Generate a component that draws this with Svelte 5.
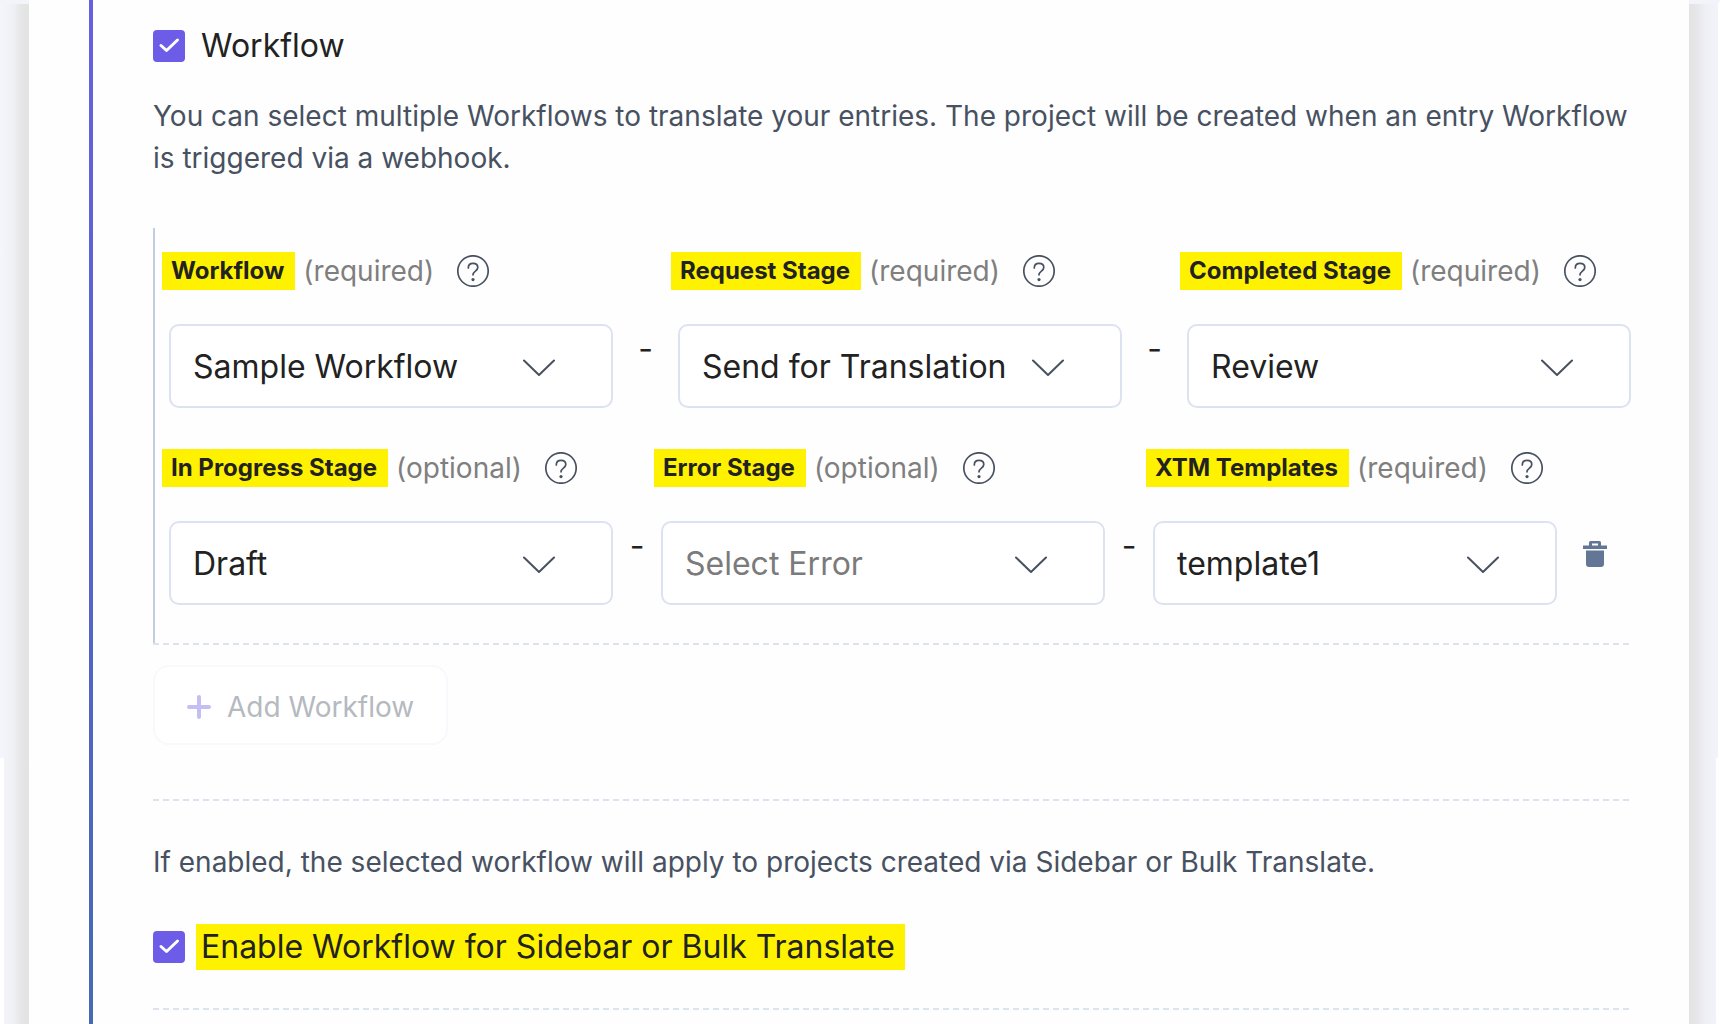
<script lang="ts">
  type Field = {
    id: string;
    label: string;
    hint: string;
    value: string;
    narrow?: boolean;
    placeholder?: boolean;
  };

  const rows: Field[][] = [
    [
      { id: "workflow", label: "Workflow", hint: "required", value: "Sample Workflow" },
      { id: "request", label: "Request Stage", hint: "required", value: "Send for Translation" },
      { id: "completed", label: "Completed Stage", hint: "required", value: "Review" },
    ],
    [
      { id: "progress", label: "In Progress Stage", hint: "optional", value: "Draft" },
      { id: "error", label: "Error Stage", hint: "optional", value: "Select Error", placeholder: true },
      { id: "template", label: "XTM Templates", hint: "required", value: "template1", narrow: true },
    ],
  ];

  let useWorkflow = $state(true);
  let useSidebar = $state(true);
</script>

{#snippet tick()}
  <svg class="tick" viewBox="0 0 32 32" aria-hidden="true">
    <path d="M8 15.5 L13.5 20.5 L24.5 10" />
  </svg>
{/snippet}

<div class="page">
  <div class="gutter left"></div>
  <main class="panel">
    <section class="content">
      <label class="check">
        <span class="box">
          <input type="checkbox" bind:checked={useWorkflow} />
          {@render tick()}
        </span>
        <span class="check-text">Workflow</span>
      </label>

      <p class="intro">
        You can select multiple Workflows to translate your entries. The project will be created
        when an entry Workflow is triggered via a webhook.
      </p>

      <div class="group">
        {#each rows as row, r}
          <div class="row">
            {#each row as field, i}
              {#if i > 0}
                <span class="dash" class:tight={r === 1}>-</span>
              {/if}
              <div class="field" class:narrow={field.narrow}>
                <div class="caption">
                  <label for={field.id}>
                    <mark>{field.label}</mark>
                    <span class="hint">({field.hint})</span>
                  </label>
                  <button type="button" class="help" aria-label="Help">
                    <svg viewBox="0 0 32 32" aria-hidden="true">
                      <circle cx="16" cy="16" r="15.2" />
                      <path d="M11.3 13 C11.3 10.2 13.2 8.4 16 8.4 C18.8 8.4 20.8 10.1 20.8 12.6 C20.8 16 16 16.2 16 19.8" />
                      <circle class="dot" cx="16" cy="24.6" r="1.6" />
                    </svg>
                  </button>
                </div>
                <div class="select">
                  <select id={field.id} class:placeholder={field.placeholder}>
                    <option>{field.value}</option>
                  </select>
                  <svg class="chevron" viewBox="0 0 32 18" aria-hidden="true">
                    <path d="M1 1.5 L16 16 L31 1.5" />
                  </svg>
                </div>
              </div>
            {/each}
            {#if r === 1}
              <button type="button" class="trash" aria-label="Delete workflow">
                <svg viewBox="0 0 24 26" aria-hidden="true">
                  <path d="M6 4.5 V1.5 Q6 0 7.5 0 H16.5 Q18 0 18 1.5 V4.5 H24 V8 H0 V4.5 Z M9 2.6 V4.5 H15 V2.6 Z" fill-rule="evenodd" />
                  <path d="M3 9.5 H21 V23 Q21 26 18 26 H6 Q3 26 3 23 Z" />
                </svg>
              </button>
            {/if}
          </div>
        {/each}
      </div>
      <div class="rule"></div>

      <button type="button" class="add" disabled>
        <svg viewBox="0 0 24 24" aria-hidden="true">
          <path d="M12 2 V22 M2 12 H22" />
        </svg>
        Add Workflow
      </button>

      <div class="rule"></div>

      <p class="note">
        If enabled, the selected workflow will apply to projects created via Sidebar or Bulk
        Translate.
      </p>

      <label class="check">
        <span class="box">
          <input type="checkbox" bind:checked={useSidebar} />
          {@render tick()}
        </span>
        <mark class="check-text">Enable Workflow for Sidebar or Bulk Translate</mark>
      </label>

      <div class="rule last"></div>
    </section>
  </main>
  <div class="gutter right"></div>
</div>

<style>
  :global(body) {
    margin: 0;
    background: #fff;
  }
  .page {
    display: grid;
    grid-template-columns: 29px 1fr 31px;
    min-height: 100vh;
    font-family: Inter, "Liberation Sans", sans-serif;
    font-optical-sizing: none;
    color: #222;
  }
  .gutter {
    border-top: 4px solid #f3f4f9;
  }
  .left {
    background:
      linear-gradient(#fff, #fff) 0 754px / 4px 100% no-repeat,
      linear-gradient(to right, #f4f6fb, #eef0f4 48%, #e6e6e7 72%, #e3e3e3);
  }
  .right {
    border-right: 2px solid #fff;
    background:
      linear-gradient(#fff, #fff) 100% 754px / 2px 100% no-repeat,
      linear-gradient(to left, #f3f4fa, #eeeff4 48%, #e6e6e7 76%, #e3e3e3);
  }
  .panel {
    padding-left: 60px;
    background: #fefefe;
  }
  .content {
    box-sizing: border-box;
    min-height: 100%;
    padding: 23px 58px 14px 60px;
    border-left: 4px solid;
    border-image: linear-gradient(#6660e0, #4868b4) 1;
  }

  .check {
    display: flex;
    align-items: center;
    gap: 11px;
  }
  .box {
    display: grid;
    width: 32px;
    height: 32px;
  }
  .box > :global(*) {
    grid-area: 1 / 1;
  }
  .box input {
    appearance: none;
    width: 32px;
    height: 32px;
    margin: 0;
    border: 2px solid #6c5ce7;
    border-radius: 4px;
  }
  .box input:checked {
    background: #6c5ce7;
  }
  .tick {
    width: 32px;
    height: 32px;
    fill: none;
    stroke: #fff;
    stroke-width: 3;
    stroke-linecap: round;
    stroke-linejoin: round;
    pointer-events: none;
  }
  .check-text {
    padding: 0 10px 0 5px;
    font-size: 32px;
    line-height: 46px;
  }
  mark {
    background: #fff200;
    color: #222;
  }

  .intro,
  .note {
    margin: 0;
    font-size: 28px;
    line-height: 42px;
    color: #475161;
  }
  .intro {
    padding: 26px 0 49px;
  }
  .note {
    padding: 40px 0 41px;
  }

  .group {
    display: flex;
    flex-direction: column;
    gap: 41px;
    padding: 24px 0 38px 14px;
    border-left: 2px solid #c3cde0;
  }
  .row {
    display: flex;
  }
  .field {
    display: flex;
    flex: 444 1 0;
    flex-direction: column;
    gap: 34px;
    min-width: 0;
  }
  .field.narrow {
    flex-grow: 404;
  }
  .caption,
  .caption label {
    display: flex;
    align-items: center;
    white-space: nowrap;
  }
  .caption {
    gap: 23px;
    height: 38px;
  }
  .caption label {
    gap: 8px;
    margin-left: -7px;
  }
  .caption mark {
    padding: 0 11px 0 9px;
    font-size: 24px;
    font-weight: 700;
    line-height: 38px;
  }
  .hint {
    font-size: 28px;
    line-height: 38px;
    color: #7f7f7f;
  }
  .help {
    display: flex;
    padding: 0;
    border: none;
    background: none;
    cursor: pointer;
  }
  .help svg {
    width: 32px;
    height: 32px;
    fill: none;
    stroke: #475161;
    stroke-width: 1.7;
    stroke-linecap: round;
  }
  .help .dot {
    fill: #475161;
    stroke: none;
  }

  .select {
    display: grid;
    align-items: center;
  }
  .select > * {
    grid-area: 1 / 1;
  }
  select {
    appearance: none;
    width: 100%;
    height: 84px;
    padding: 0 90px 0 22px;
    border: 2px solid #dde2f0;
    border-radius: 10px;
    background: #fff;
    font: inherit;
    font-size: 32px;
    color: #222;
  }
  select.placeholder {
    color: #7b7b7b;
  }
  .chevron {
    justify-self: end;
    width: 32px;
    height: 18px;
    margin: 4px 58px 0 0;
    fill: none;
    stroke: #475161;
    stroke-width: 2;
    stroke-linecap: round;
    stroke-linejoin: round;
    pointer-events: none;
  }
  .dash {
    width: 65px;
    padding-top: 78px;
    font-size: 32px;
    line-height: 38px;
    text-align: center;
  }
  .dash.tight {
    width: 48px;
  }
  .trash {
    display: flex;
    width: 74px;
    padding: 92px 0 0 26px;
    border: none;
    background: none;
    cursor: pointer;
  }
  .trash svg {
    width: 24px;
    height: 26px;
    fill: #647696;
  }

  .rule {
    height: 2px;
    background: repeating-linear-gradient(to right, #dde3ee 0 6px, transparent 6px 10px);
  }
  .rule.last {
    margin-top: 38px;
  }
  .add {
    display: flex;
    align-items: center;
    gap: 16px;
    height: 80px;
    margin: 20px 0 54px;
    padding: 4px 32px 0;
    border: 2px solid #f8f8fd;
    border-radius: 16px;
    background: #fff;
    font: inherit;
    font-size: 28px;
    color: #b5b9c0;
  }
  .add svg {
    width: 24px;
    height: 24px;
    fill: none;
    stroke: #c4bef5;
    stroke-width: 4;
    stroke-linecap: round;
  }
</style>
